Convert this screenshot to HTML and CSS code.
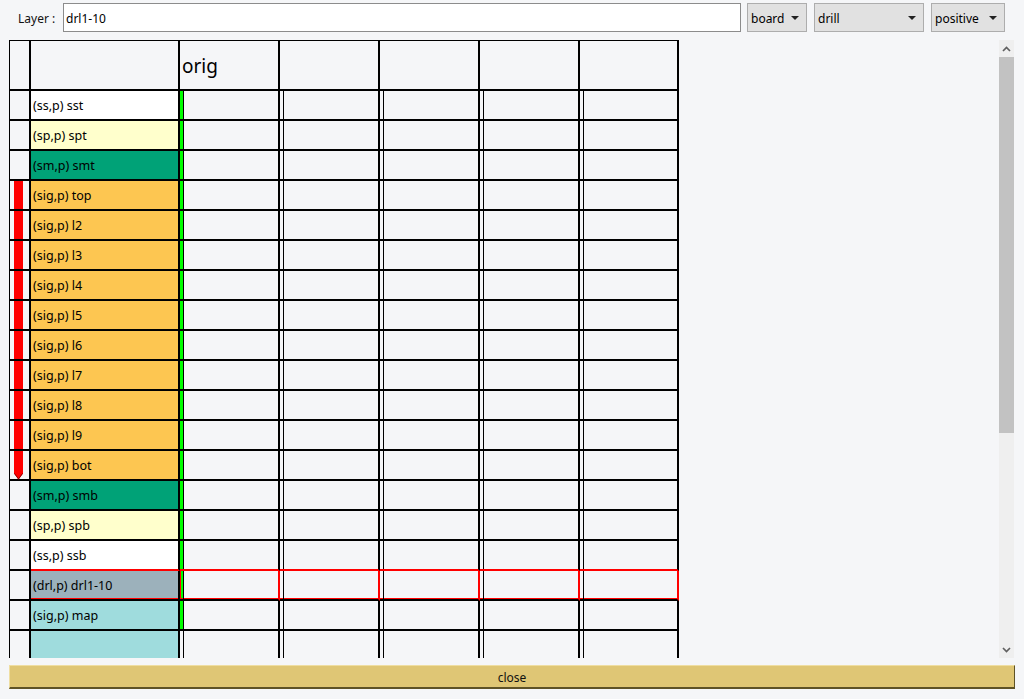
FILE: index.html
```html
<!DOCTYPE html>
<html>
<head>
<meta charset="utf-8">
<title>Layer</title>
<link rel="stylesheet" href="styles.css">
</head>
<body>
<div class="toolbar">
  <span class="lbl">Layer :</span>
  <div class="input">drl1-10</div>
  <div class="select s-board"><span>board</span><span class="caret"></span></div>
  <div class="select s-drill"><span>drill</span><span class="caret"></span></div>
  <div class="select s-pos"><span>positive</span><span class="caret"></span></div>
</div>

<div class="main">
  <div class="viewport">
    <div class="grid">
      <div class="row head">
        <div class="c0"></div><div class="c1"></div>
        <div class="cd hd">orig</div><div class="cd hd"></div><div class="cd hd"></div><div class="cd hd"></div><div class="cd hd"></div>
      </div>
      <div class="row">
        <div class="c0"></div><div class="c1 ss">(ss,p) sst</div>
        <div class="cd g"><i></i></div><div class="cd"><i></i></div><div class="cd"><i></i></div><div class="cd"><i></i></div><div class="cd"><i></i></div>
      </div>
      <div class="row">
        <div class="c0"></div><div class="c1 sp">(sp,p) spt</div>
        <div class="cd g"><i></i></div><div class="cd"><i></i></div><div class="cd"><i></i></div><div class="cd"><i></i></div><div class="cd"><i></i></div>
      </div>
      <div class="row">
        <div class="c0"></div><div class="c1 sm">(sm,p) smt</div>
        <div class="cd g"><i></i></div><div class="cd"><i></i></div><div class="cd"><i></i></div><div class="cd"><i></i></div><div class="cd"><i></i></div>
      </div>
      <div class="row">
        <div class="c0"><b class="bar"></b></div><div class="c1 sig">(sig,p) top</div>
        <div class="cd g"><i></i></div><div class="cd"><i></i></div><div class="cd"><i></i></div><div class="cd"><i></i></div><div class="cd"><i></i></div>
      </div>
      <div class="row">
        <div class="c0"><b class="bar"></b></div><div class="c1 sig">(sig,p) l2</div>
        <div class="cd g"><i></i></div><div class="cd"><i></i></div><div class="cd"><i></i></div><div class="cd"><i></i></div><div class="cd"><i></i></div>
      </div>
      <div class="row">
        <div class="c0"><b class="bar"></b></div><div class="c1 sig">(sig,p) l3</div>
        <div class="cd g"><i></i></div><div class="cd"><i></i></div><div class="cd"><i></i></div><div class="cd"><i></i></div><div class="cd"><i></i></div>
      </div>
      <div class="row">
        <div class="c0"><b class="bar"></b></div><div class="c1 sig">(sig,p) l4</div>
        <div class="cd g"><i></i></div><div class="cd"><i></i></div><div class="cd"><i></i></div><div class="cd"><i></i></div><div class="cd"><i></i></div>
      </div>
      <div class="row">
        <div class="c0"><b class="bar"></b></div><div class="c1 sig">(sig,p) l5</div>
        <div class="cd g"><i></i></div><div class="cd"><i></i></div><div class="cd"><i></i></div><div class="cd"><i></i></div><div class="cd"><i></i></div>
      </div>
      <div class="row">
        <div class="c0"><b class="bar"></b></div><div class="c1 sig">(sig,p) l6</div>
        <div class="cd g"><i></i></div><div class="cd"><i></i></div><div class="cd"><i></i></div><div class="cd"><i></i></div><div class="cd"><i></i></div>
      </div>
      <div class="row">
        <div class="c0"><b class="bar"></b></div><div class="c1 sig">(sig,p) l7</div>
        <div class="cd g"><i></i></div><div class="cd"><i></i></div><div class="cd"><i></i></div><div class="cd"><i></i></div><div class="cd"><i></i></div>
      </div>
      <div class="row">
        <div class="c0"><b class="bar"></b></div><div class="c1 sig">(sig,p) l8</div>
        <div class="cd g"><i></i></div><div class="cd"><i></i></div><div class="cd"><i></i></div><div class="cd"><i></i></div><div class="cd"><i></i></div>
      </div>
      <div class="row">
        <div class="c0"><b class="bar"></b></div><div class="c1 sig">(sig,p) l9</div>
        <div class="cd g"><i></i></div><div class="cd"><i></i></div><div class="cd"><i></i></div><div class="cd"><i></i></div><div class="cd"><i></i></div>
      </div>
      <div class="row">
        <div class="c0"><svg class="tip" width="9" height="29" viewBox="0 0 9 29"><path d="M0 0 H9 V22.5 L4.5 28.5 L0 22.5 Z" fill="#ff0000"/><path d="M0.5 22.5 L4.5 28 L8.5 22.5" fill="none" stroke="#8a0000" stroke-width="1"/></svg></div><div class="c1 sig">(sig,p) bot</div>
        <div class="cd g"><i></i></div><div class="cd"><i></i></div><div class="cd"><i></i></div><div class="cd"><i></i></div><div class="cd"><i></i></div>
      </div>
      <div class="row">
        <div class="c0"></div><div class="c1 sm">(sm,p) smb</div>
        <div class="cd g"><i></i></div><div class="cd"><i></i></div><div class="cd"><i></i></div><div class="cd"><i></i></div><div class="cd"><i></i></div>
      </div>
      <div class="row">
        <div class="c0"></div><div class="c1 sp">(sp,p) spb</div>
        <div class="cd g"><i></i></div><div class="cd"><i></i></div><div class="cd"><i></i></div><div class="cd"><i></i></div><div class="cd"><i></i></div>
      </div>
      <div class="row pre">
        <div class="c0"></div><div class="c1 ss">(ss,p) ssb</div>
        <div class="cd g"><i></i></div><div class="cd"><i></i></div><div class="cd"><i></i></div><div class="cd"><i></i></div><div class="cd"><i></i></div>
      </div>
      <div class="row sel">
        <div class="c0"></div><div class="c1 drl">(drl,p) drl1-10</div>
        <div class="cd g"><i></i></div><div class="cd"><i></i></div><div class="cd"><i></i></div><div class="cd"><i></i></div><div class="cd"><i></i></div>
      </div>
      <div class="row">
        <div class="c0"></div><div class="c1 map">(sig,p) map</div>
        <div class="cd g"><i></i></div><div class="cd"><i></i></div><div class="cd"><i></i></div><div class="cd"><i></i></div><div class="cd"><i></i></div>
      </div>
      <div class="row">
        <div class="c0"></div><div class="c1 map"></div>
        <div class="cd"><i></i></div><div class="cd"><i></i></div><div class="cd"><i></i></div><div class="cd"><i></i></div><div class="cd"><i></i></div>
      </div>
    </div>
  </div>
  <div class="vscroll">
    <div class="sb-btn"><svg width="9" height="6" viewBox="0 0 9 6"><path d="M1 5 L4.5 1.5 L8 5" fill="none" stroke="#606060" stroke-width="1.7"/></svg></div>
    <div class="sb-thumb"></div>
    <div class="sb-track"></div>
    <div class="sb-btn"><svg width="9" height="6" viewBox="0 0 9 6"><path d="M1 1 L4.5 4.5 L8 1" fill="none" stroke="#606060" stroke-width="1.7"/></svg></div>
  </div>
</div>

<div class="closebar">close</div>
</body>
</html>
```

FILE: styles.css
```css
html, body {
  margin: 0;
  padding: 0;
}
body {
  width: 1024px;
  height: 699px;
  overflow: hidden;
  background: #f5f6f8;
  font-family: "Noto Sans", "Open Sans", sans-serif;
  font-size: 12px;
  color: #000;
}

/* toolbar */
.toolbar {
  display: flex;
  align-items: stretch;
  height: 29px;
  padding: 3px 0 0 18px;
  margin-bottom: 8px;
}
.lbl {
  width: 45px;
  display: flex;
  align-items: center;
  padding-top: 2px;
  color: #111;
}
.input {
  box-sizing: border-box;
  width: 678px;
  background: #fff;
  border: 1px solid #8c8c8c;
  padding: 2px 0 0 2px;
  display: flex;
  align-items: center;
}
.select {
  box-sizing: border-box;
  background: #e1e1e1;
  border: 1px solid #adadad;
  display: flex;
  align-items: center;
  justify-content: space-between;
  padding: 2px 7px 0 3px;
  margin-left: 6px;
}
.s-board { width: 60px; }
.s-drill { width: 110px; margin-left: 7px; }
.s-pos { width: 74px; margin-left: 7px; }
.caret {
  width: 0;
  height: 0;
  border-left: 4px solid transparent;
  border-right: 4px solid transparent;
  border-top: 4px solid #222;
  margin-top: -1px;
}

/* main area */
.main {
  display: flex;
  height: 618px;
  padding-left: 9px;
}
.viewport {
  width: 990px;
  height: 618px;
  overflow: hidden;
}
.grid {
  width: fit-content;
  border-top: 1px solid #000;
  border-left: 1px solid #000;
}
.row {
  display: flex;
  height: 30px;
}
.row.head {
  height: 50px;
}
.row > div {
  box-sizing: border-box;
  height: 100%;
  border-right: 2px solid #000;
  border-bottom: 2px solid #000;
}
.c0 {
  width: 21px;
  padding-left: 4px;
}
.bar {
  display: block;
  width: 9px;
  height: 100%;
  background: #ff0000;
}
.tip {
  display: block;
}
.c1 {
  width: 149px;
  padding: 1px 0 0 2px;
  display: flex;
  align-items: center;
  white-space: nowrap;
  font-size: 12.5px;
}
.cd {
  width: 100px;
  padding-left: 3px;
}
.cd i {
  display: block;
  height: 100%;
  border-left: 1px solid #000;
}
.cd.g {
  background: linear-gradient(to right, #00ff00 3px, transparent 3px);
}
.cd.hd {
  padding: 2px 0 0 2px;
  font-size: 19px;
  display: flex;
  align-items: center;
}
.row > .cd:last-child {
  width: 99px;
}

.ss { background: #ffffff; }
.sp { background: #ffffcc; }
.sm { background: #00a277; }
.sig { background: #fdc651; }
.drl { background: #9cb1bb; }
.map { background: #9fdcdd; }

.row.pre > .c1,
.row.pre > .cd {
  border-bottom-color: #ff0000;
}
.row.sel > .c1,
.row.sel > .cd {
  box-shadow: inset 0 -1px 0 #ff0000;
}
.row.sel > .cd {
  border-right-color: #ff0000;
}
.row.sel > .cd.g {
  box-shadow: inset 1px 0 0 #ff0000, inset 0 -1px 0 #ff0000;
}

/* scrollbar */
.vscroll {
  width: 15px;
  height: 618px;
  display: flex;
  flex-direction: column;
  background: #efefef;
}
.sb-btn {
  height: 17px;
  display: flex;
  align-items: center;
  justify-content: center;
}
.sb-thumb {
  height: 376px;
  background: #c2c2c2;
}
.sb-track {
  flex: 1;
}

/* close */
.closebar {
  box-sizing: border-box;
  margin: 7px 0 0 9px;
  width: 1006px;
  height: 24px;
  padding-top: 1px;
  background: #dfc675;
  border-top: 1px solid #efdea2;
  border-left: 1px solid #efdea2;
  border-right: 1px solid #5e5226;
  border-bottom: 2px solid #5e5226;
  display: flex;
  align-items: center;
  justify-content: center;
  color: #111;
}
```
